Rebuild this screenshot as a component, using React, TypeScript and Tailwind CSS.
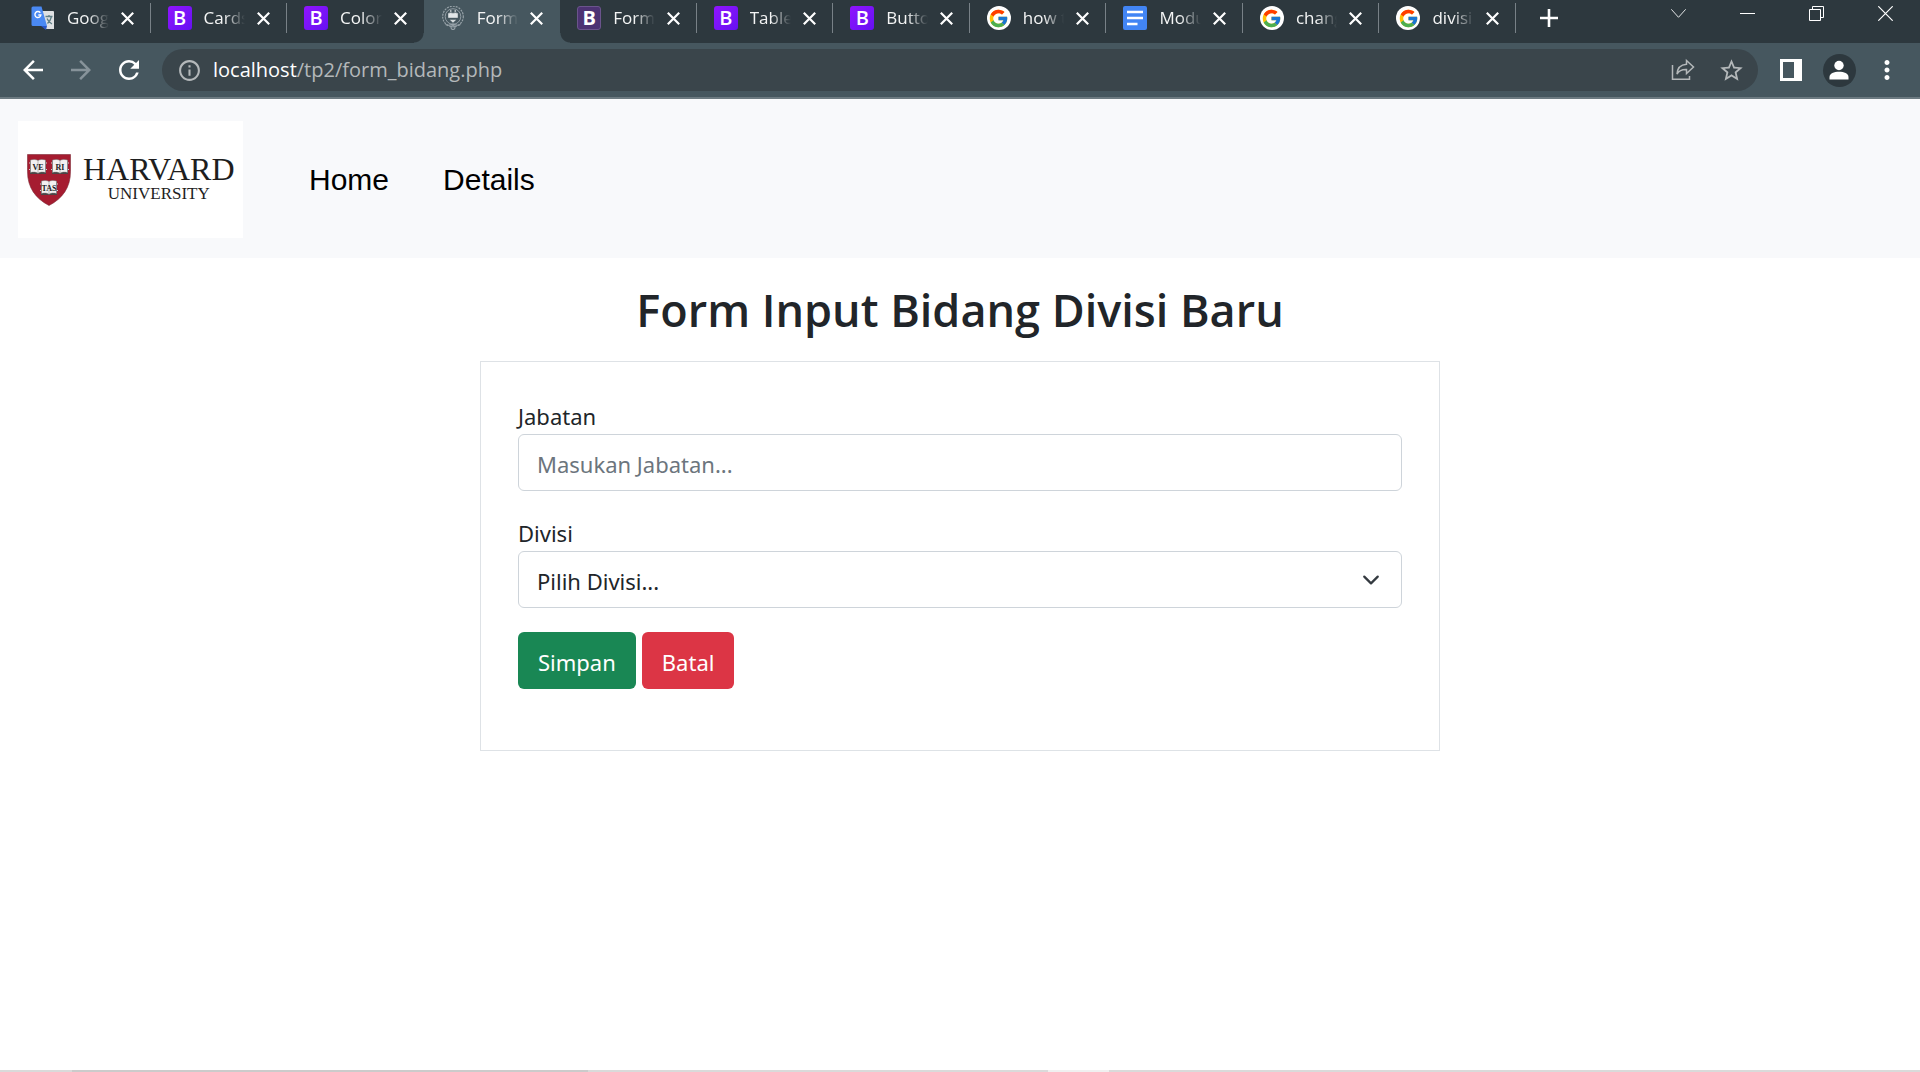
import React from 'react';
import { MdArrowBack, MdArrowForward, MdRefresh, MdInfoOutline, MdStarBorder, MdMoreVert } from 'react-icons/md';
import { FcGoogle } from 'react-icons/fc';

type IconKind = 'translate' | 'bootstrap' | 'bootstrap4' | 'crest' | 'google' | 'docs';

const tabs: { title: string; icon: IconKind; active?: boolean; divider?: boolean }[] = [
  { title: 'Goog', icon: 'translate', divider: true },
  { title: 'Cards', icon: 'bootstrap', divider: true },
  { title: 'Color', icon: 'bootstrap' },
  { title: 'Form', icon: 'crest', active: true },
  { title: 'Form', icon: 'bootstrap4', divider: true },
  { title: 'Table', icon: 'bootstrap', divider: true },
  { title: 'Butto', icon: 'bootstrap', divider: true },
  { title: 'how t', icon: 'google', divider: true },
  { title: 'Modu', icon: 'docs', divider: true },
  { title: 'chang', icon: 'google', divider: true },
  { title: 'divisi', icon: 'google', divider: true },
];

function TranslateIcon() {
  return (
    <svg viewBox="0 0 24 24" className="size-6">
      <path d="M9 5h13a1 1 0 0 1 1 1v17H14z" fill="#dfe1e3" />
      <path d="M10 20l5 4 1-4z" fill="#2a56c6" />
      <path d="M2 0.5h8.500l5.500 19.500H2A1.500 1.500 0 0 1 .5 18.500V2A1.500 1.500 0 0 1 2 .5z" fill="#4a89f3" />
      <path d="M14.500 10.500h7M18 9v1.500M20.500 10.500c-.6 3-2.500 5.500-4 7M16 12.500c1 2.500 2.800 4.300 5 5.500" fill="none" stroke="#5f7f86" strokeWidth="1.300" />
      <path d="M9.300 6.700A3 3 0 1 0 9.900 9H7.300" fill="none" stroke="#fff" strokeWidth="1.400" />
    </svg>
  );
}

function CrestIcon() {
  return (
    <svg viewBox="0 0 24 24" className="size-6" fill="none" stroke="#98a3a9">
      <circle cx="12" cy="10.500" r="10.300" strokeWidth="1.200" strokeDasharray="2 1" />
      <circle cx="12" cy="10.500" r="7.800" strokeWidth=".9" />
      <path d="M4.500 18.500c3 1.500 5.500.5 7.500-.5 2 1 4.500 2 7.500.5M10 21.500a2 2 0 1 0 4 0l-2-3z" strokeWidth="1.100" />
      <path d="M7.500 7.500c1.500-.8 3-.8 4.500 0 1.500-.8 3-.8 4.500 0v4h-9z" fill="#e2e6e8" stroke="#e2e6e8" strokeWidth=".6" />
      <path d="M9 5h1.500M13.500 5H15M10.500 14.500h3l-1.500 1.300z" strokeWidth="1.300" stroke="#d3d8da" />
    </svg>
  );
}

function DocsIcon() {
  return (
    <svg viewBox="0 0 24 24" className="size-6">
      <rect width="24" height="24" rx="2" fill="#4285f4" />
      <path d="M4 6h16M4 12h16M4 18h10.500" stroke="#fff" strokeWidth="2.600" />
    </svg>
  );
}

function TabIcon({ kind }: { kind: IconKind }) {
  switch (kind) {
    case 'translate':
      return <TranslateIcon />;
    case 'crest':
      return <CrestIcon />;
    case 'docs':
      return <DocsIcon />;
    case 'google':
      return (
        <span className="flex size-6 items-center justify-center rounded-full bg-white">
          <FcGoogle size={21} />
        </span>
      );
    case 'bootstrap4':
      return (
        <span className="flex size-6 items-center justify-center rounded-[3px] border border-[#6b548c] bg-[#4d3373] text-[20px] leading-none font-bold text-white">
          B
        </span>
      );
    default:
      return (
        <span className="flex size-6 items-center justify-center rounded-[3px] bg-linear-to-br from-[#9013fe] to-[#6610f2] text-[20px] leading-none font-semibold text-white">
          B
        </span>
      );
  }
}

function CloseGlyph() {
  return (
    <svg viewBox="0 0 13 13" className="size-[13px]" stroke="#fff" strokeWidth="2.200">
      <path d="M.8.8l11.400 11.400M12.200.8L.8 12.200" />
    </svg>
  );
}

function TabStrip() {
  return (
    <div className="flex h-[43px] bg-[#2d383e] pl-[14px] text-[17px] text-[#f4f5f5]">
      <div className="flex max-w-[1502px] min-w-0 flex-1">
        {tabs.map((tab, i) => (
          <div
            key={i}
            className={
              tab.active
                ? 'relative flex min-w-0 flex-1 items-center bg-[#46575f] pr-[17px] pb-[7px] pl-[17px]'
                : 'relative flex min-w-0 flex-1 items-center pr-[17px] pb-[7px] pl-[17px]'
            }
          >
            {tab.active && (
              <>
                <span className="absolute bottom-0 -left-[10px] size-[10px] bg-[radial-gradient(circle_at_top_left,#2d383e_9px,#46575f_10px)]" />
                <span className="absolute -right-[10px] bottom-0 size-[10px] bg-[radial-gradient(circle_at_top_right,#2d383e_9px,#46575f_10px)]" />
              </>
            )}
            <span className="shrink-0">
              <TabIcon kind={tab.icon} />
            </span>
            <span className="mx-3 min-w-0 flex-1 overflow-hidden leading-6 whitespace-nowrap [mask-image:linear-gradient(90deg,#000_50%,transparent)]">
              {tab.title}
            </span>
            <button type="button" aria-label="Close tab">
              <CloseGlyph />
            </button>
            {tab.divider && <span className="absolute top-[3px] right-0 h-[30px] w-px bg-[#788187]" />}
          </div>
        ))}
      </div>
      <button type="button" aria-label="New tab" className="flex w-[66px] items-center justify-center pb-[7px]">
        <svg viewBox="0 0 18 18" className="size-[18px]" stroke="#fff" strokeWidth="2.600">
          <path d="M9 0v18M0 9h18" />
        </svg>
      </button>
      <div className="ml-auto flex h-[27px]">
        <button type="button" aria-label="Search tabs" className="flex w-[69px] items-center justify-center">
          <svg viewBox="0 0 15 15" className="size-[15px]" fill="none" stroke="#e3e5e6" strokeWidth="1">
            <path d="M.3 3.300l7.200 8 7.200-8" />
          </svg>
        </button>
        <button type="button" aria-label="Minimize" className="flex w-[69px] items-center justify-center">
          <svg viewBox="0 0 15 15" className="size-[15px]" stroke="#fff" strokeWidth="1">
            <path d="M0 7.500h15" />
          </svg>
        </button>
        <button type="button" aria-label="Restore" className="flex w-[69px] items-center justify-center">
          <svg viewBox="0 0 15 15" className="size-[15px]" fill="none" stroke="#fff" strokeWidth="1">
            <path d="M.5 3.500h11v11H.5zM3.500 3.500v-3h11v11h-3" />
          </svg>
        </button>
        <button type="button" aria-label="Close window" className="flex w-[69px] items-center justify-center">
          <svg viewBox="0 0 15 15" className="size-[15px]" stroke="#fff" strokeWidth="1.200">
            <path d="M.3.300l14.400 14.400M14.700.3L.3 14.700" />
          </svg>
        </button>
      </div>
    </div>
  );
}

function Toolbar() {
  const cell = 'flex w-12 items-center justify-center';
  return (
    <div className="flex h-14 items-center border-b-2 border-[#6c7a81] bg-[#46575f] px-[9px] text-white">
      <button type="button" aria-label="Back" className={cell}>
        <MdArrowBack size={30} />
      </button>
      <button type="button" aria-label="Forward" className="flex w-12 items-center justify-center text-[#87939a]">
        <MdArrowForward size={30} />
      </button>
      <button type="button" aria-label="Reload" className={cell}>
        <MdRefresh size={30} />
      </button>
      <div className="mx-[9px] flex h-[42px] min-w-0 flex-1 items-center rounded-full bg-[#3a454b] pr-[3px] pl-[15px] text-[#b4b8ba]">
        <MdInfoOutline size={25} className="mr-[11px] shrink-0" />
        <div
          role="textbox"
          aria-label="Address"
          contentEditable
          suppressContentEditableWarning
          className="min-w-0 flex-1 text-[20px] leading-7 whitespace-nowrap outline-none"
        >
          <span className="text-white">localhost</span>/tp2/form_bidang.php
        </div>
        <button type="button" aria-label="Share" className={cell}>
          <svg viewBox="0 0 24 24" className="size-6" fill="none" stroke="#b4b8ba" strokeWidth="1.500">
            <path d="M1.500 7v14.300H18.500V18" />
            <path d="M15.500 2.500l7 6.500-7 6.500v-4c-4.500-.2-7.500 1.200-9.500 4.500.3-5.300 3.500-9.300 9.500-9.800z" />
          </svg>
        </button>
        <button type="button" aria-label="Bookmark" className={cell}>
          <MdStarBorder size={27} className="text-[#b4b8ba]" />
        </button>
      </div>
      <button type="button" aria-label="Side panel" className={cell}>
        <svg viewBox="0 0 22 22" className="size-[22px]">
          <path d="M0 0h22v22H0zM3 3v16h11V3z" fill="#fff" fillRule="evenodd" />
        </svg>
      </button>
      <button type="button" aria-label="Profile" className={cell}>
        <span className="flex size-[33px] items-center justify-center rounded-full bg-[#2d383e]">
          <svg viewBox="0 0 20 20" className="size-5" fill="#fff">
            <circle cx="10" cy="5.500" r="4.700" />
            <path d="M.5 19.500v-2.500c0-3.500 4.500-5.200 9.500-5.200s9.500 1.700 9.500 5.200v2.500z" />
          </svg>
        </span>
      </button>
      <button type="button" aria-label="Menu" className={cell}>
        <MdMoreVert size={30} />
      </button>
    </div>
  );
}

function Book({ x, y, label }: { x: number; y: number; label: string }) {
  return (
    <g transform={`translate(${x} ${y})`}>
      <path d="M0 4h18M0 10.500h18" stroke="#d9cfcf" strokeWidth="1.200" />
      <rect x="1" y="1.500" width="16" height="13.500" fill="#4a4445" />
      <path d="M1.500 1c3-.8 5.500-.8 7.500.6 2-1.400 4.500-1.400 7.500-.6v12.500c-3-.6-5.500-.6-7.500.8-2-1.400-4.500-1.400-7.500-.8z" fill="#f3f1f1" stroke="#777" strokeWidth=".5" />
      <path d="M9 2v12" stroke="#9a9595" strokeWidth=".6" />
      <text x="9" y="10.500" textAnchor="middle" fontSize="8" fontWeight="700" fill="#222" fontFamily="'Liberation Serif', serif">
        {label}
      </text>
    </g>
  );
}

function Logo() {
  return (
    <a
      href="#"
      aria-label="Harvard University"
      className="flex h-[117px] w-[225px] items-center gap-3 bg-white pl-[9px] font-['Liberation_Serif',serif] text-[#1e1e1e]"
    >
      <svg viewBox="0 0 44 52" className="h-[52px] w-11 shrink-0">
        <path d="M.5.5h43v17c0 16-8 27-21.500 34C8.500 44.500.5 33.500.5 17.500z" fill="#a51c30" stroke="#7d2a36" strokeWidth=".6" />
        <Book x={2} y={5} label="VE" />
        <Book x={24} y={5} label="RI" />
        <Book x={13} y={26} label="TAS" />
      </svg>
      <span className="flex flex-col items-center pb-1">
        <span className="text-[32px] leading-8">HARVARD</span>
        <span className="text-[17px] leading-[18px]">UNIVERSITY</span>
      </span>
    </a>
  );
}

function Navbar() {
  return (
    <nav className="flex items-center bg-[#f8f9fb] pt-[22px] pb-5 pl-[18px] font-['Liberation_Sans',Arial,sans-serif] text-[30px] leading-9 text-black">
      <Logo />
      <div className="ml-[39px] flex">
        <a href="#home" className="px-[27px]">Home</a>
        <a href="#details" className="px-[27px]">Details</a>
      </div>
    </nav>
  );
}

function DivisionForm() {
  return (
    <form
      onSubmit={(e) => e.preventDefault()}
      className="mx-auto w-1/2 border border-[#dee2e6] px-[37px] pt-9 pb-[61px] font-['Noto_Sans',sans-serif] text-[22px] leading-9 text-[#212529]"
    >
      <label htmlFor="jabatan" className="block">Jabatan</label>
      <input
        id="jabatan"
        type="text"
        placeholder="Masukan Jabatan..."
        className="block h-[57px] w-full rounded-md border border-[#ced4da] bg-white px-[18px] pt-0.5 placeholder:text-[#6c757d]"
      />
      <label htmlFor="divisi" className="mt-6 block">Divisi</label>
      <div className="relative">
        <select
          id="divisi"
          className="block h-[57px] w-full appearance-none rounded-md border border-[#ced4da] bg-white px-[18px] pt-0.5"
        >
          <option>Pilih Divisi...</option>
        </select>
        <svg
          viewBox="0 0 16 16"
          className="pointer-events-none absolute top-5 right-[22px] size-[18px]"
          fill="none"
          stroke="#343a40"
          strokeWidth="2"
          strokeLinecap="round"
          strokeLinejoin="round"
        >
          <path d="M2 5l6 6 6-6" />
        </svg>
      </div>
      <div className="mt-6 flex gap-1.5 text-white">
        <button type="submit" className="h-[57px] rounded-md bg-[#198754] px-5 pt-0.5">Simpan</button>
        <button type="button" className="h-[57px] rounded-md bg-[#dc3545] px-5 pt-0.5">Batal</button>
      </div>
    </form>
  );
}

export default function App() {
  return (
    <div className="flex min-h-screen flex-col bg-white font-['Open_Sans',sans-serif]">
      <TabStrip />
      <Toolbar />
      <Navbar />
      <main className="flex-1">
        <h1 className="pt-6 pb-[23px] text-center text-[45px] leading-14 font-semibold text-[#212529]">
          Form Input Bidang Divisi Baru
        </h1>
        <DivisionForm />
      </main>
      <div className="flex h-0.5 bg-[#dadada]">
        <span className="ml-[72px] w-[516px] bg-[#cbcbcb]" />
        <span className="ml-[460px] w-[61px] bg-[#f0f0f0]" />
      </div>
    </div>
  );
}
